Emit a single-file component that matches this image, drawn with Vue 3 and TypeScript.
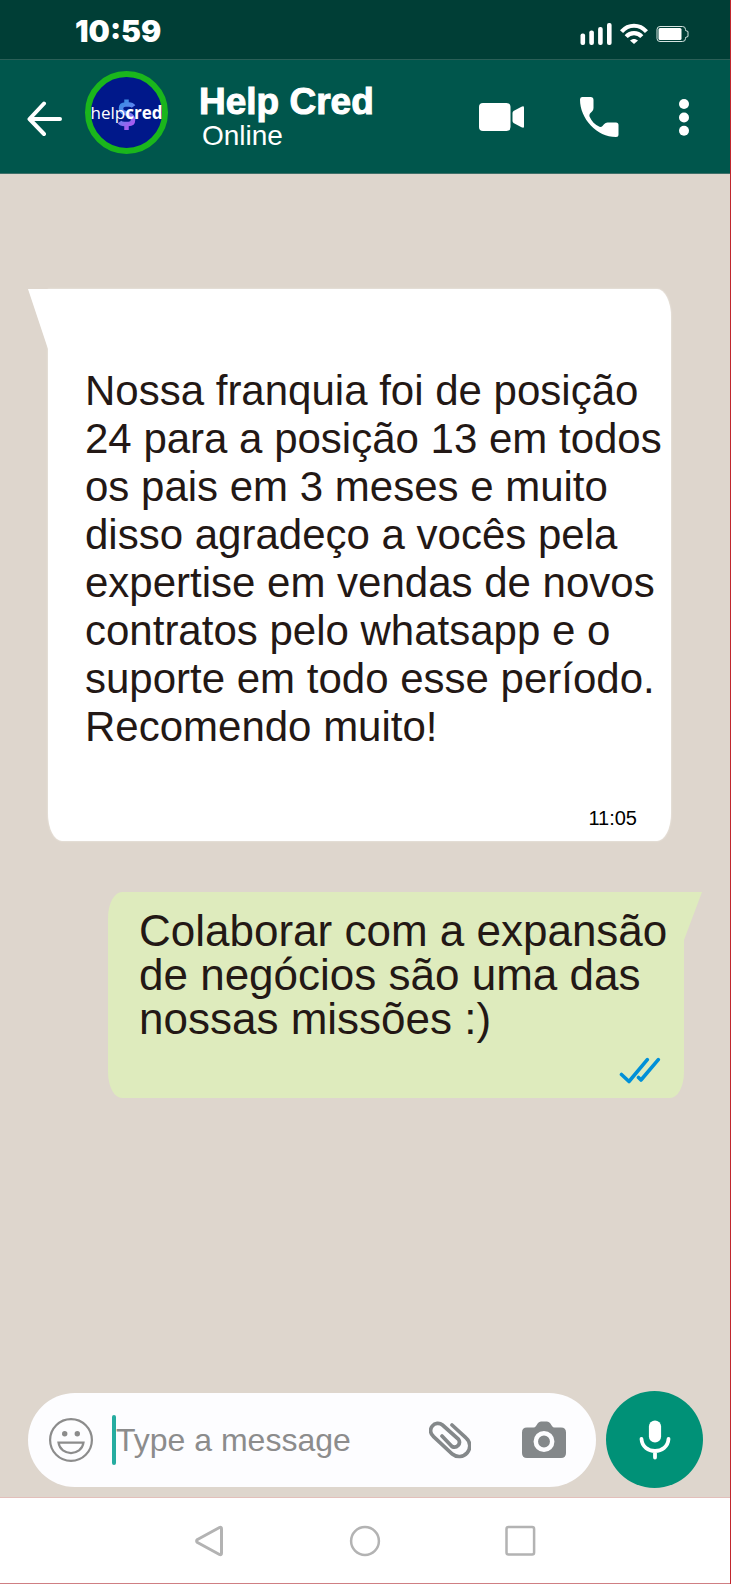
<script setup lang="ts">
import { ref } from 'vue'

interface Contact {
  name: string
  status: string
}

const clock = '10:59'
const contact: Contact = { name: 'Help Cred', status: 'Online' }
const received = {
  text: 'Nossa franquia foi de posição 24 para a posição 13 em todos os pais em 3 meses e muito disso agradeço a vocês pela expertise em vendas de novos contratos pelo whatsapp e o suporte em todo esse período. Recomendo muito!',
  time: '11:05',
}
const sent = 'Colaborar com a expansão de negócios são uma das nossas missões :)'
const draft = ref('')
</script>

<template>
  <div class="phone">
    <div class="status-bar">
      <span class="clock">{{ clock }}</span>
      <div class="indicators">
        <svg width="32" height="22" viewBox="0 0 32 22" fill="#fff" aria-hidden="true">
          <rect x="0.500" y="10.500" width="4.600" height="11.500" rx="2" />
          <rect x="9.300" y="7.500" width="4.600" height="14.500" rx="2" />
          <rect x="18.100" y="4" width="4.600" height="18" rx="2" />
          <rect x="27" y="0" width="4.600" height="22" rx="2" />
        </svg>
        <svg width="28" height="22" viewBox="0 0 28 22" aria-hidden="true">
          <g fill="none" stroke="#fff" stroke-width="4.200">
            <path d="M1.500 8.600C8.500 0.800 19.500 0.800 26.500 8.600" />
            <path d="M6.200 13.600C10.500 9 17.500 9 21.800 13.600" />
          </g>
          <path d="M10 17.600C12.500 15.300 15.500 15.300 18 17.600L14 21Z" fill="#fff" />
        </svg>
        <svg width="33" height="18" viewBox="0 0 33 18" aria-hidden="true">
          <path d="M4 1.500H26.500Q29.500 1.500 29.500 4.500V5.500L32 6.500V11.500L29.500 12.500V13.500Q29.500 16.500 26.500 16.500H4Q1 16.500 1 13.500V4.500Q1 1.500 4 1.500Z" fill="none" stroke="#d5e4e1" stroke-width="1" />
          <rect x="2.500" y="3" width="23" height="12" rx="1.500" fill="#fff" />
        </svg>
      </div>
    </div>

    <header class="chat-header">
      <button class="icon-button back" type="button" aria-label="Back">
        <svg width="36" height="36" viewBox="0 0 36 36" fill="none" stroke="#fff" stroke-width="4" stroke-linecap="round" stroke-linejoin="round">
          <path d="M33 18H3M17 2.500L2.500 18L17 33" />
        </svg>
      </button>
      <svg class="avatar" width="83" height="83" viewBox="0 0 83 83" role="img" aria-label="helpcred">
        <defs>
          <linearGradient id="coin" gradientUnits="userSpaceOnUse" x1="33" y1="30" x2="50" y2="50">
            <stop offset="0" stop-color="#2f8be0" />
            <stop offset="0.500" stop-color="#5a86ee" />
            <stop offset="1" stop-color="#a45cf0" />
          </linearGradient>
        </defs>
        <circle cx="41.500" cy="41.500" r="38.500" fill="#00188a" stroke="#1ab61c" stroke-width="6" />
        <path d="M48.500 35.500Q47 33.500 44 33.500H40.500Q36 33.500 36 37.500Q36 41 40 42L44 43.500Q48 45 48 49Q48 53 43.500 53H39.500Q36 53 34.500 51M41.500 28.500V34M41.500 53V59" fill="none" stroke="url(#coin)" stroke-width="4.500" />
        <text x="41.500" y="48" text-anchor="middle" class="brand">help<tspan class="brand-strong">cred</tspan></text>
      </svg>
      <div class="contact">
        <h1 class="name">{{ contact.name }}</h1>
        <p class="presence">{{ contact.status }}</p>
      </div>
      <div class="actions">
        <button class="icon-button" type="button" aria-label="Video call">
          <svg width="45" height="28" viewBox="0 0 45 28" fill="#fff">
            <rect width="31.500" height="28" rx="4" />
            <path d="M33.500 10Q33.500 8.800 34.500 8L42.500 3.700Q45 2.500 45 4.500V23.500Q45 25.500 42.500 24.300L34.500 20Q33.500 19.200 33.500 18Z" />
          </svg>
        </button>
        <button class="icon-button" type="button" aria-label="Voice call">
          <svg width="39" height="40" viewBox="0 0 39 40" fill="#fff">
            <path d="M2 0H10.500Q13.500 0 13.500 3V11Q13.500 13 12 14.500L10 16.500Q9 17.800 9.500 19.500C11.500 24 15 28 19.500 29.800Q21.300 30.300 22.500 29L24 27.300Q25.500 25.500 27.500 25.500H36Q38.500 25.500 38.500 28V37.500Q38.500 40 36 40C17 40 0 22 0 2.500Q0 0 2 0Z" />
          </svg>
        </button>
        <button class="icon-button" type="button" aria-label="More options">
          <svg width="18" height="38" viewBox="0 0 18 38" fill="#fff">
            <circle cx="9" cy="6" r="5" />
            <circle cx="9" cy="19.500" r="5" />
            <circle cx="9" cy="32.800" r="5" />
          </svg>
        </button>
      </div>
    </header>

    <main class="conversation">
      <article class="bubble received">
        <p class="received-text">{{ received.text }}</p>
        <time class="time">{{ received.time }}</time>
      </article>
      <article class="bubble sent">
        <p class="sent-text">{{ sent }}</p>
        <svg class="ticks" width="42" height="27" viewBox="0 0 42 27" fill="none" stroke="#0090d8" stroke-width="3.600" stroke-linecap="round" stroke-linejoin="round" role="img" aria-label="Read">
          <path d="M2.500 17.500L10 24.500L28.300 2.700M19.500 20.500L22 23L39.300 2.700" />
        </svg>
      </article>
    </main>

    <form class="composer" @submit.prevent>
      <div class="field">
        <button class="icon-button" type="button" aria-label="Emoji">
          <svg width="44" height="44" viewBox="0 0 44 44" fill="none" stroke="#8c8c8c" stroke-width="2.200">
            <circle cx="22" cy="22" r="20.900" />
            <path d="M9.500 24.700H34.500C32.500 38.500 11.500 38.500 9.500 24.700Z" />
            <circle cx="15.700" cy="15.700" r="2.700" fill="#8c8c8c" stroke="none" />
            <circle cx="28.300" cy="15.700" r="2.700" fill="#8c8c8c" stroke="none" />
          </svg>
        </button>
        <span class="caret" aria-hidden="true"></span>
        <input v-model="draft" class="message-input" type="text" placeholder="Type a message" aria-label="Type a message" />
        <button class="icon-button clip" type="button" aria-label="Attach">
          <svg width="42" height="38" viewBox="0 0 42 38" fill="none" stroke="#84888a" stroke-width="3.700" stroke-linecap="round">
            <path d="M23 4L37 16.800A10 10 0 0 1 23.300 33L4.300 15.300A7 7 0 0 1 13.500 4L29.500 18.300A5 5 0 0 1 23 25.500L13 15" />
          </svg>
        </button>
        <button class="icon-button" type="button" aria-label="Camera">
          <svg width="44" height="37" viewBox="0 0 44 37">
            <path d="M5 6.500H11.500Q13 6.500 14 5L16 2Q17.300 0.500 19 0.500H25Q26.700 0.500 28 2L30 5Q31 6.500 32.500 6.500H39Q44 6.500 44 11.500V32Q44 37 39 37H5Q0 37 0 32V11.500Q0 6.500 5 6.500Z" fill="#84888a" />
            <circle cx="22" cy="20.500" r="8.200" fill="#84888a" stroke="#fdfdff" stroke-width="4.500" />
          </svg>
        </button>
      </div>
      <button class="mic" type="button" aria-label="Record voice message">
        <svg width="32" height="40" viewBox="0 0 32 40" fill="none" stroke="#fff" stroke-width="3.800" stroke-linecap="round">
          <rect x="9.900" y="0.500" width="12.200" height="22" rx="6.100" fill="#fff" stroke="none" />
          <path d="M2.500 19C3.500 35 28.500 35 29.500 19M16 31.500V37.500" />
        </svg>
      </button>
    </form>

    <nav class="system-nav" aria-label="System">
      <button class="icon-button" type="button" aria-label="Back">
        <svg width="32" height="32" viewBox="0 0 32 32" fill="none" stroke="#b3b3b3" stroke-width="3" stroke-linejoin="round">
          <path d="M26.500 2.500Q28.500 1.500 28.500 4V28Q28.500 30.500 26.500 29.500L4.500 17.500Q2.700 16 4.500 14.500Z" />
        </svg>
      </button>
      <button class="icon-button" type="button" aria-label="Home">
        <svg width="32" height="32" viewBox="0 0 32 32" fill="none" stroke="#b3b3b3" stroke-width="2.500">
          <circle cx="16" cy="16" r="13.900" />
        </svg>
      </button>
      <button class="icon-button" type="button" aria-label="Recent apps">
        <svg width="32" height="32" viewBox="0 0 32 32" fill="none" stroke="#b3b3b3" stroke-width="2.500">
          <rect x="1.500" y="2" width="27.600" height="27.600" rx="2" />
        </svg>
      </button>
    </nav>
  </div>
</template>

<style>
body {
  margin: 0;
}
</style>

<style scoped>
.phone {
  box-sizing: border-box;
  min-height: 100vh;
  display: flex;
  flex-direction: column;
  border-right: 1px solid #c1272d;
  background: #ded6cd;
  font-family: "Liberation Sans", Arial, sans-serif;
}

.phone p,
.phone h1 {
  margin: 0;
}

.icon-button,
.mic {
  display: flex;
  align-items: center;
  justify-content: center;
  flex: none;
  padding: 0;
  border: 0;
  background: none;
  cursor: pointer;
}

.status-bar {
  height: 59px;
  display: flex;
  align-items: center;
  justify-content: space-between;
  padding: 0 41px 0 75px;
  border-bottom: 1px solid #2a5f57;
  background: #003e36;
}

.clock {
  padding-top: 2px;
  color: #fff;
  font: 900 30px/32px Inter, "Liberation Sans", sans-serif;
}

.indicators {
  display: flex;
  align-items: center;
  gap: 8px;
  padding-top: 9px;
}

.chat-header {
  height: 113px;
  display: flex;
  align-items: center;
  padding: 0 37px 0 27px;
  border-bottom: 1px solid #3f7069;
  background: #00564c;
}

.back {
  padding-top: 4px;
}

.avatar {
  flex: none;
  margin: 0 31px 8px 22px;
}

.brand {
  fill: #fff;
  font: 400 17px "Open Sans", "Noto Sans", sans-serif;
}

.brand-strong {
  font-weight: 700;
}

.contact {
  flex: 1;
  display: flex;
  flex-direction: column;
  gap: 2px;
  color: #fff;
}

.name {
  font-size: 37px;
  line-height: 36px;
  font-weight: 700;
  -webkit-text-stroke: 1px #fff;
}

.presence {
  padding-left: 3px;
  font-size: 28px;
  line-height: 28px;
}

.actions {
  display: flex;
  align-items: center;
  gap: 56px;
}

.conversation {
  flex: 1;
  display: flex;
  flex-direction: column;
  gap: 51px;
  padding: 115px 46px 64px 48px;
}

.bubble {
  position: relative;
  display: flex;
  flex-direction: column;
  color: #231815;
}

.bubble::before {
  content: "";
  position: absolute;
  top: 0;
  width: 20px;
  background: inherit;
}

.received {
  margin-right: 13px;
  padding: 78px 6px 11px 37px;
  gap: 55px;
  border-radius: 0 14px 14px 14px / 0 28px 28px 28px;
  background: #fff;
  box-shadow: 0 0 2px #f4f1ec;
}

.received::before {
  right: 100%;
  height: 60px;
  clip-path: polygon(0 0, 100% 0, 100% 100%);
}

.received-text {
  font-size: 42px;
  line-height: 48px;
}

.time {
  align-self: flex-end;
  margin-right: 28px;
  color: #000;
  font-size: 20px;
  line-height: 24px;
}

.sent {
  margin-left: 60px;
  padding: 17px 6px 14px 31px;
  gap: 16px;
  border-radius: 14px 0 14px 14px / 26px 0 26px 26px;
  background: #deebbd;
}

.sent::before {
  left: 100%;
  width: 18px;
  height: 48px;
  clip-path: polygon(0 0, 100% 0, 0 100%);
}

.sent-text {
  font-size: 44px;
  line-height: 44px;
}

.ticks {
  align-self: flex-end;
  margin-right: 17px;
}

.composer {
  display: flex;
  align-items: center;
  gap: 10px;
  padding: 0 27px 9px 28px;
}

.field {
  flex: 1;
  min-width: 0;
  box-sizing: border-box;
  height: 94px;
  display: flex;
  align-items: center;
  padding: 0 30px 0 21px;
  border-radius: 47px;
  background: #fdfdff;
}

.caret {
  flex: none;
  width: 4px;
  height: 50px;
  margin-left: 19px;
  border-radius: 2px;
  background: #26aca0;
}

.message-input {
  flex: 1;
  min-width: 0;
  height: 50px;
  padding: 2px 0 0;
  box-sizing: border-box;
  border: 0;
  outline: 0;
  background: none;
  color: #231815;
  font: 32px "Liberation Sans", Arial, sans-serif;
}

.message-input::placeholder {
  color: #8c8c8c;
  opacity: 1;
}

.clip {
  margin-right: 51px;
}

.mic {
  width: 97px;
  height: 97px;
  border-radius: 50%;
  background: #009177;
}

.system-nav {
  height: 85px;
  display: grid;
  grid-template-columns: repeat(3, 156px);
  justify-content: center;
  border-top: 1px solid #e3bfba;
  border-bottom: 1px solid #cf7f83;
  background: #fff;
}
</style>
